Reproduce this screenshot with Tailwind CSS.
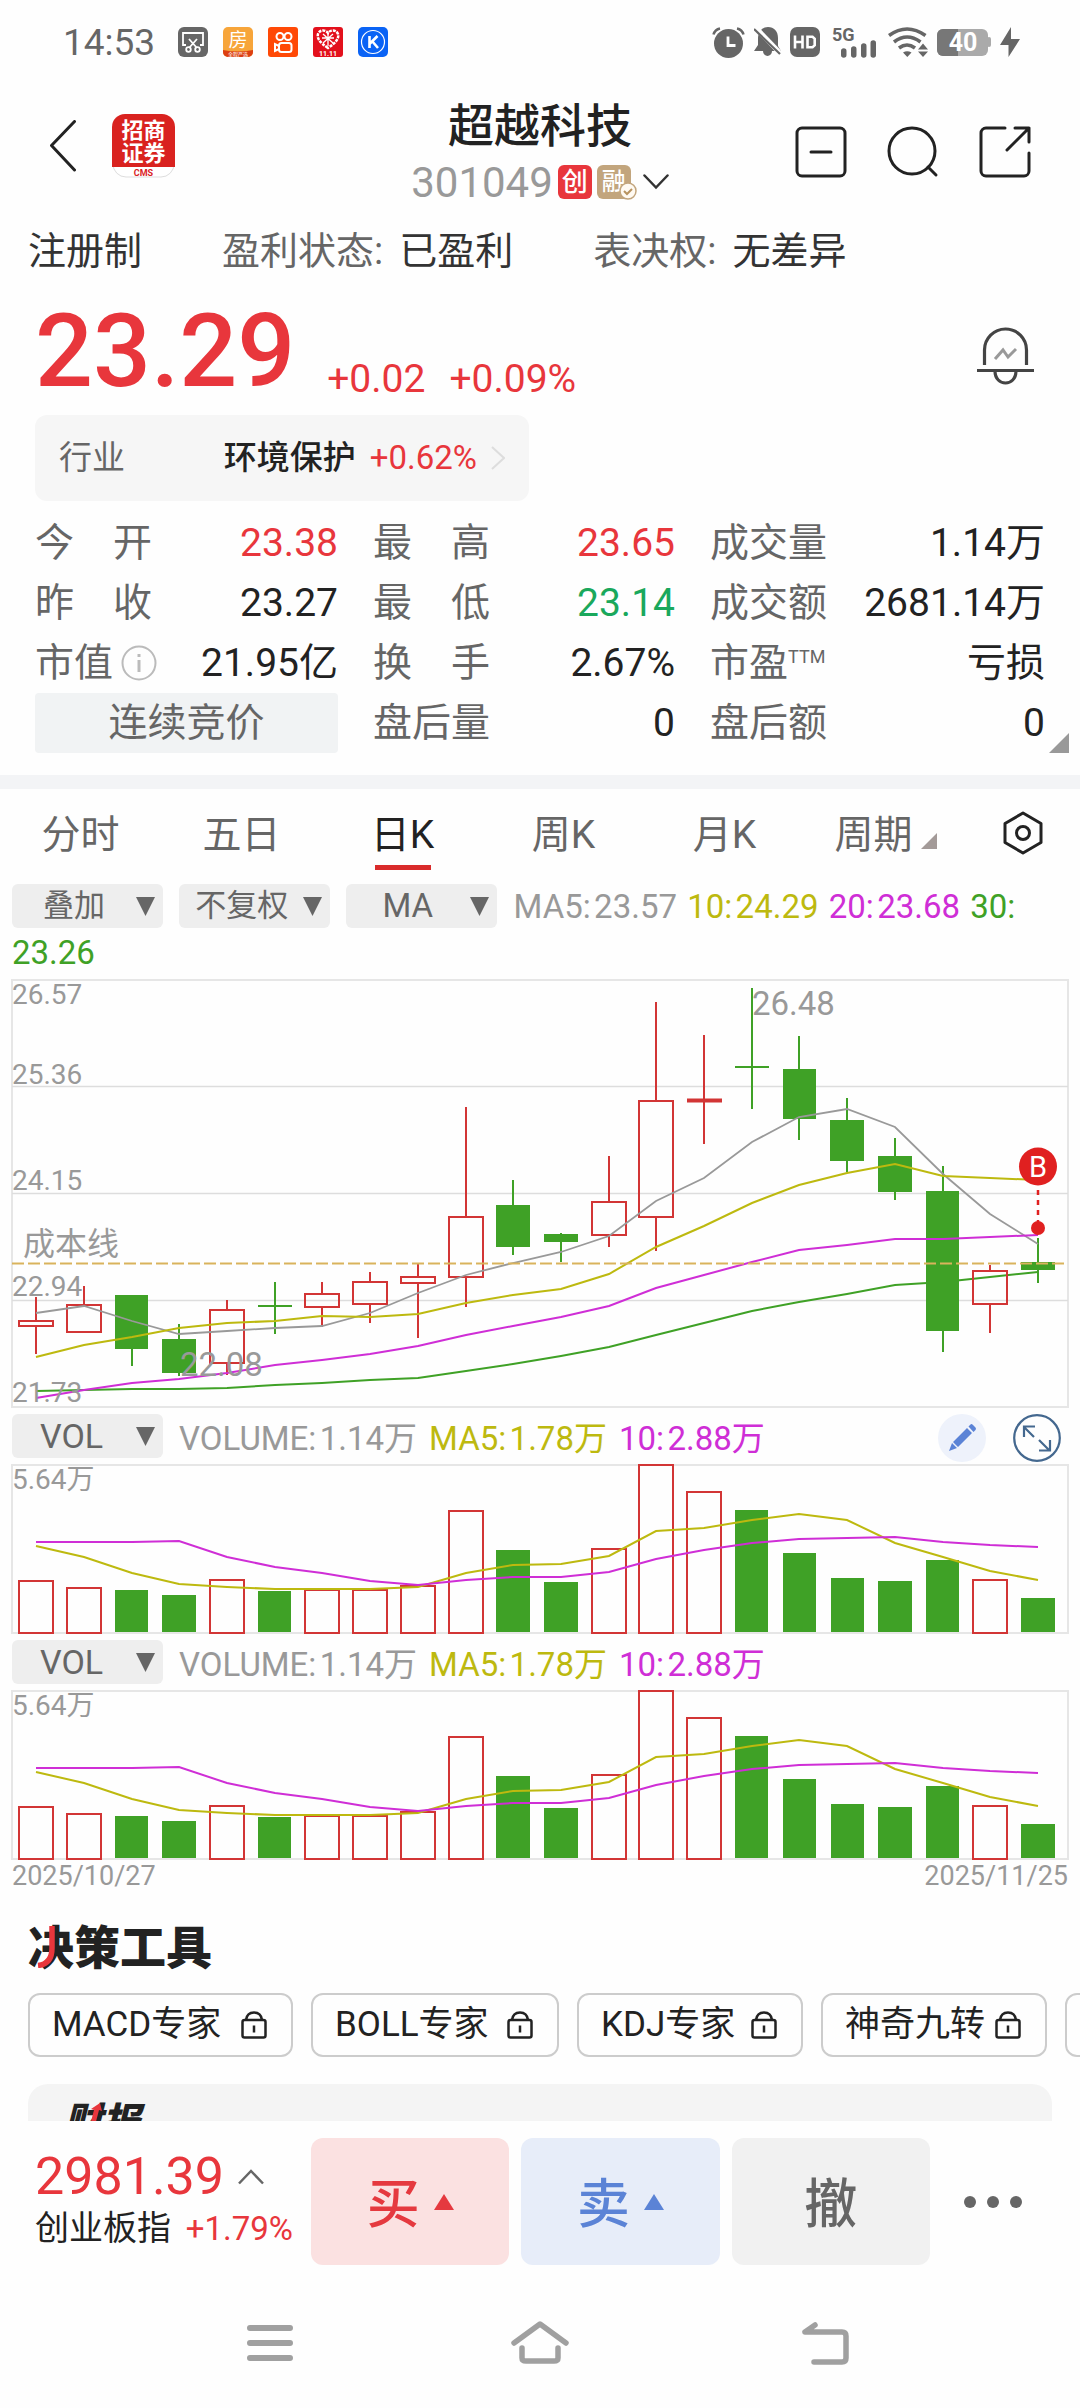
<!DOCTYPE html>
<html lang="zh-CN">
<head>
<meta charset="utf-8">
<meta name="viewport" content="width=device-width, initial-scale=1">
<title>超越科技 301049</title>
<script src="https://cdn.jsdelivr.net/npm/@tailwindcss/browser@4"></script>
</head>
<body class="flex h-screen flex-col overflow-hidden bg-[#fefefe] font-['Roboto','Noto_Sans_CJK_SC',sans-serif] text-[#222]">

<!-- System status bar -->
<div class="flex h-[84px] shrink-0 items-center justify-between pl-[63px] pr-[60px] text-[#666]">
  <div class="flex items-center gap-[15px]">
    <span class="mr-2 text-[37px] leading-none">14:53</span>
    <svg class="size-[30px]" viewBox="0 0 30 30" fill="none" stroke="#fff" stroke-width="1.8"><rect width="30" height="30" rx="6" fill="#666" stroke="none"/><path d="M8 18H5V6h20v12h-3"/><path d="M11 12l8 9M19 12l-8 9"/><circle cx="10.500" cy="22.500" r="2.300"/><circle cx="19.500" cy="22.500" r="2.300"/></svg>
    <svg class="size-[30px]" viewBox="0 0 30 30"><rect width="30" height="30" rx="5" fill="#f7a53a"/><path d="M0 23q15 3 30 0v2a5 5 0 0 1-5 5H5a5 5 0 0 1-5-5z" fill="#dc3f12"/><text x="15" y="20" font-size="19" fill="#fff" text-anchor="middle">房</text><text x="15" y="29" font-size="5" fill="#fff" text-anchor="middle">全程严选</text></svg>
    <svg class="size-[30px]" viewBox="0 0 30 30" fill="none" stroke="#fff" stroke-width="2"><rect width="30" height="30" rx="3" fill="#ff4906" stroke="none"/><circle cx="12" cy="9.500" r="3.500"/><circle cx="20" cy="9.500" r="3.500"/><rect x="11" y="16" width="12.500" height="9" rx="2.500"/><path d="M11 19l-4-2v7l4-2"/></svg>
    <svg class="size-[30px]" viewBox="0 0 30 30"><rect width="30" height="30" rx="3" fill="#e3101c"/><path d="M15 21C6 15 4 11 5 7c2-5 8-4 10-1 2-3 8-4 10 1 1 4-1 8-10 14z" fill="none" stroke="#fff" stroke-width="2.500" stroke-dasharray="3 1"/><path d="M10 7l10 9M20 7l-10 9M9 11h12M15 7v12" stroke="#fff" stroke-width="1.300"/><text x="15" y="29" font-size="7" font-weight="700" fill="#fff" text-anchor="middle">11.11</text></svg>
    <svg class="size-[30px]" viewBox="0 0 30 30" fill="none" stroke="#fff"><rect width="30" height="30" rx="5" fill="#0a63f5" stroke="none"/><circle cx="15" cy="15" r="11.500" stroke-width="1.200"/><path d="M11.500 9v12M19.500 9l-7.500 7.500M14 14l6 7" stroke-width="2.600"/></svg>
  </div>
  <div class="flex items-center gap-[9px]">
    <svg class="h-[31px] w-[33px]" viewBox="0 0 33 31"><circle cx="16.500" cy="16.500" r="14.500" fill="#666"/><path d="M1.500 7.500Q3 2.500 8 1.500M31.500 7.500Q30 2.500 25 1.500" stroke="#666" stroke-width="2.500" fill="none"/><path d="M16 9.500v9h7.500" stroke="#fefefe" stroke-width="2.800" fill="none"/></svg>
    <svg class="h-[30px] w-[27px]" viewBox="0 0 27 30"><path d="M4 12C4 5 8 0 14 0s10 4 10 11v8l3 5H18a4.500 5 0 0 1-9 0H0l4-6z" fill="#666"/><path d="M1 0l26 27" stroke="#fefefe" stroke-width="5"/><path d="M0 2l26 25" stroke="#666" stroke-width="2.200"/></svg>
    <svg class="size-[30px]" viewBox="0 0 30 30" fill="none" stroke="#fefefe" stroke-width="2.600"><rect width="30" height="30" rx="7" fill="#666" stroke="none"/><path d="M5 8.500v13M12.500 8.500v13M5 15h7.500M17.500 9.700h5l2.200 2.200v6.200l-2.200 2.200h-5z"/></svg>
    <svg class="ml-[3px] h-[30px] w-11 overflow-visible" viewBox="0 0 44 30" fill="#666"><text x="0" y="14" font-size="18" font-weight="700">5G</text><path d="M9 24a2.500 2.500 0 0 1 5.500 0v4a2.500 2.500 0 0 1-5.500 0zM19 22a2.500 2.500 0 0 1 5.500 0v6a2.500 2.500 0 0 1-5.500 0zM29 19a2.500 2.500 0 0 1 5.500 0v9a2.500 2.500 0 0 1-5.500 0zM38.500 16a2.500 2.500 0 0 1 5.500 0v12a2.500 2.500 0 0 1-5.500 0z"/></svg>
    <svg class="ml-[3px] h-[30px] w-10" viewBox="0 0 40 30" fill="none" stroke="#666" stroke-width="3.600"><path d="M1 8.500Q19 -4.500 37.500 8.500M6 15Q19 5 32.500 15M11 21Q19 15 27 21"/><path d="M15 25.500q4-2.500 8.500 0L19.300 30zM30 22.500l5-6 5 6zM30 24.500h10l-5 5.500z" fill="#666" stroke="none"/></svg>
    <svg class="h-[27px] w-[54px]" viewBox="0 0 54 27"><rect width="51" height="27" rx="6" fill="#aaa"/><path d="M6 0h15v27H6a6 6 0 0 1-6-6V6a6 6 0 0 1 6-6z" fill="#777"/><rect x="50" y="8" width="4" height="10" rx="2" fill="#aaa"/><text x="26" y="22" font-size="25" font-weight="700" fill="#fff" text-anchor="middle">40</text></svg>
    <svg class="h-[30px] w-5" viewBox="0 0 20 30" fill="#666"><path d="M11 0v12h9L8.500 30V18H0z"/></svg>
  </div>
</div>

<!-- Stock header -->
<header class="relative flex h-[123px] shrink-0 items-center justify-between pl-12 pr-[49px]">
  <div class="flex items-center">
    <button aria-label="返回" class="mr-[36px]"><svg class="h-[52px] w-7" viewBox="0 0 28 52" fill="none" stroke="#222" stroke-width="3" stroke-linecap="round" stroke-linejoin="round"><path d="M26.500 1.500L3.500 25.500L26.500 50"/></svg></button>
    <a href="#" aria-label="招商证券"><svg class="h-[64px] w-[63px]" viewBox="0 0 63 64"><rect x="1" y="1" width="61" height="62" rx="13" fill="#fff" stroke="#ddd"/><path d="M0 53V13A13 13 0 0 1 13 0h37a13 13 0 0 1 13 13v40z" fill="#d9221f"/><g fill="#fff" font-size="22" font-weight="700" text-anchor="middle"><text x="31.500" y="24">招商</text><text x="31.500" y="47">证券</text></g><text x="31.500" y="61.500" font-size="9" font-weight="700" fill="#d9221f" text-anchor="middle">CMS</text></svg></a>
  </div>
  <div class="absolute inset-x-0 top-4 mx-auto flex w-[260px] flex-col items-center">
    <h1 class="text-[46px] font-medium leading-[52px]">超越科技</h1>
    <button class="flex h-[60px] items-center">
      <span class="mr-[5px] text-[42px] text-[#999]">301049</span>
      <span class="mr-[5px] flex h-[34px] w-[34px] items-center justify-center rounded-md bg-[#e8363c] text-[26px] font-medium leading-none text-white">创</span>
      <span class="relative flex h-[34px] w-[34px] items-center justify-center rounded-md bg-[#c2a57d] text-[24px] font-medium leading-none text-white">融<svg class="absolute -right-[6px] -bottom-px size-[18px]" viewBox="0 0 18 18" fill="none"><circle cx="9" cy="9" r="8" fill="#fffaf2" stroke="#c2a57d" stroke-width="1.500"/><path d="M5 9l3 3 5-5" stroke="#b8935f" stroke-width="2"/></svg></span>
      <svg class="ml-3 h-4 w-[26px]" viewBox="0 0 26 16" fill="none" stroke="#333" stroke-width="2.500" stroke-linecap="round"><path d="M1.500 1.500L13 13.500L24.500 1.500"/></svg>
    </button>
  </div>
  <div class="flex items-center gap-[40px] pt-3">
    <button aria-label="移除自选"><svg class="size-[52px]" viewBox="0 0 52 52" fill="none" stroke="#222" stroke-width="3" stroke-linecap="round"><rect x="2" y="2" width="48" height="48" rx="5"/><path d="M16 26h20"/></svg></button>
    <button aria-label="搜索"><svg class="size-[52px]" viewBox="0 0 52 52" fill="none" stroke="#222" stroke-width="3" stroke-linecap="round"><circle cx="25" cy="25" r="23"/><path d="M41 41l8 8"/></svg></button>
    <button aria-label="分享"><svg class="size-[52px]" viewBox="0 0 52 52" fill="none" stroke="#222" stroke-width="3" stroke-linecap="round" stroke-linejoin="round"><path d="M26 2H7a5 5 0 0 0-5 5v38a5 5 0 0 0 5 5h38a5 5 0 0 0 5-5V27M36 2h14v14M50 2L28 24"/></svg></button>
  </div>
</header>

<main class="min-h-0 flex-1 overflow-y-auto [scrollbar-width:none]">
  <div class="flex h-[88px] items-center px-7 text-[38px] text-[#666]">
    <span class="mr-[80px] text-[#333]">注册制</span>
    <span class="mr-[80px]">盈利状态:<span class="ml-4 text-[#333]">已盈利</span></span>
    <span>表决权:<span class="ml-4 text-[#333]">无差异</span></span>
  </div>

  <section class="px-[35px]">
    <div class="flex h-[120px] items-start justify-between text-[#e8363c]">
      <div class="flex items-end">
        <span class="text-[102px] font-medium leading-[112px]">23.29</span>
        <span class="ml-[32px] text-[39px] leading-[56px]">+0.02</span>
        <span class="ml-6 text-[39px] leading-[56px]">+0.09%</span>
      </div>
      <button aria-label="股价提醒" class="mr-[11px] pt-8"><svg class="h-[58px] w-[57px]" viewBox="0 0 57 58" fill="none" stroke="#444" stroke-width="3.200"><path d="M7.500 38V23a21 21 0 0 1 42 0v15M0 43.500h57M18 44c0 16 21 16 21 0"/><path d="M18 32l8-9 5 7 8-8" stroke="#999" stroke-width="3"/></svg></button>
    </div>

    <a href="#" class="flex h-[86px] w-[494px] items-center rounded-xl bg-[#f6f6f6] px-6 text-[33px]">
      <span class="text-[#666]">行业</span>
      <span class="ml-auto font-medium">环境保护</span>
      <span class="ml-[14px] text-[#e8363c]">+0.62%</span>
      <svg class="ml-[14px] h-6 w-[14px]" viewBox="0 0 14 24" fill="none" stroke="#ddd" stroke-width="2"><path d="M1 1l12 11L1 23"/></svg>
    </a>

    <div class="relative mt-3 grid grid-cols-[303fr_302fr_335fr] gap-x-[35px] pb-[22px] text-[39px] leading-[60px] text-[#666]">
      <div class="flex justify-between"><span>今　开</span><span class="text-[#e8363c]">23.38</span></div>
      <div class="flex justify-between"><span>最　高</span><span class="text-[#e8363c]">23.65</span></div>
      <div class="flex justify-between"><span>成交量</span><span class="text-[#222]">1.14万</span></div>
      <div class="flex justify-between"><span>昨　收</span><span class="text-[#222]">23.27</span></div>
      <div class="flex justify-between"><span>最　低</span><span class="text-[#1aa85c]">23.14</span></div>
      <div class="flex justify-between"><span>成交额</span><span class="text-[#222]">2681.14万</span></div>
      <div class="flex justify-between"><span class="flex items-center gap-2">市值<svg class="size-9" viewBox="0 0 36 36" fill="none" stroke="#bbb" stroke-width="2"><circle cx="18" cy="18" r="16.500"/><path d="M18 15v12M18 9v3" stroke-width="3"/></svg></span><span class="text-[#222]">21.95亿</span></div>
      <div class="flex justify-between"><span>换　手</span><span class="text-[#222]">2.67%</span></div>
      <div class="flex justify-between"><span class="flex">市盈<span class="text-[18px] leading-[48px]">TTM</span></span><span class="text-[#222]">亏损</span></div>
      <button class="h-[60px] rounded bg-[#f1f3f4]">连续竞价</button>
      <div class="flex justify-between"><span>盘后量</span><span class="text-[#222]">0</span></div>
      <div class="flex justify-between"><span>盘后额</span><span class="text-[#222]">0</span></div>
      <svg class="absolute -right-6 bottom-[22px] size-5" viewBox="0 0 20 20" fill="#999"><path d="M20 0v20H0z"/></svg>
    </div>
  </section>

  <div class="h-[14px] bg-[#f3f4f6]"></div>

  <nav class="flex h-[95px] items-start text-[39px] leading-[92px] text-[#666]">
    <button class="flex-1">分时</button>
    <button class="flex-1">五日</button>
    <button class="flex flex-1 flex-col items-center text-[#222]"><span class="h-[76px]">日K</span><span class="h-[5px] w-14 bg-[#d92b2b]"></span></button>
    <button class="flex-1">周K</button>
    <button class="flex-1">月K</button>
    <button class="flex flex-1 items-center justify-center gap-2">周期<svg class="mt-3 size-4" viewBox="0 0 16 16" fill="#a39a98"><path d="M16 0v16H0z"/></svg></button>
    <button aria-label="图表设置" class="flex h-[88px] w-[114px] items-center justify-center"><svg class="h-[44px] w-10" viewBox="0 0 40 44" fill="none" stroke="#222" stroke-width="3" stroke-linejoin="round"><path d="M20 2l18 10.500v19L20 42 2 31.500v-19z"/><circle cx="20" cy="22" r="6.500"/></svg></button>
  </nav>

  <section class="px-3">
    <!-- Overlay, adjustment and indicator pickers, followed by the moving averages -->
    <div class="mb-1 text-[33px] leading-[46px]">
      <span class="relative mr-2 inline-block align-top"><select aria-label="叠加" class="block h-11 w-[151px] appearance-none rounded-md bg-[#eee] pl-[31px] text-[31px] leading-[44px] text-[#666]"><option>叠加</option></select><svg class="pointer-events-none absolute right-2 top-[13px] h-[19px] w-[19px]" viewBox="0 0 19 19" fill="#666"><path d="M0 0h19l-9.500 19z"/></svg></span>
      <span class="relative mr-2 inline-block align-top"><select aria-label="复权方式" class="block h-11 w-[151px] appearance-none rounded-md bg-[#eee] pl-4 text-[31px] leading-[44px] text-[#666]"><option>不复权</option></select><svg class="pointer-events-none absolute right-2 top-[13px] h-[19px] w-[19px]" viewBox="0 0 19 19" fill="#666"><path d="M0 0h19l-9.500 19z"/></svg></span>
      <span class="relative mr-2 inline-block align-top"><select aria-label="主图指标" class="block h-11 w-[151px] appearance-none rounded-md bg-[#eee] pl-9 text-[33px] leading-[44px] text-[#666]"><option>MA</option></select><svg class="pointer-events-none absolute right-2 top-[13px] h-[19px] w-[19px]" viewBox="0 0 19 19" fill="#666"><path d="M0 0h19l-9.500 19z"/></svg></span>
      <span class="mr-[2px] text-[#999]">MA5:&#8202;23.57</span>
      <span class="mr-[2px] text-[#bdb90f]">10:&#8202;24.29</span>
      <span class="mr-[2px] text-[#cf2ed6]">20:&#8202;23.68</span>
      <span class="text-[#3fa126]">30:</span>
      <span class="text-[#3fa126]">23.26</span>
    </div>

    <!-- Daily candles -->
    <svg class="block h-auto w-full overflow-visible" viewBox="0 0 1056 427" fill="none" role="img" aria-label="日K线图">
      <rect x="0" y="0" width="1056" height="427" stroke="#e6e6e6" stroke-width="2"/>
      <path d="M0 106.500H1056M0 213.500H1056M0 320.500H1056" stroke="#ddd" stroke-width="1.500"/>
      <polyline points="24,411 72,410 120,409 167,409 215,408 263,405 310,403 358,400 406,398 454,391 501,384 549,376 597,367 644,355 692,343 740,331 787,322 835,314 883,305 931,302 978,297 1026,292" stroke="#3fa126" stroke-width="2"/>
      <g stroke="#d23535" stroke-width="2">
        <path d="M24 317V341M24 346V374M7 341h34v5h-34zM72 306V325M55 325h34v27h-34zM215 320V330M215 383V395M198 330h34v53h-34zM310 302V314M310 327V347M293 314h34v13h-34zM358 292V302M358 324V343M341 302h34v22h-34zM406 283V297M406 303V358M389 297h34v6h-34zM454 127V237M454 297V327M437 237h34v60h-34zM597 176V222M597 255V267M580 222h34v33h-34zM644 22V121M644 237V271M627 121h34v116h-34zM692 55V164M978 285V291M978 324V353M961 291h34v33h-34z"/>
        <path d="M675 120.500h35" stroke-width="4"/>
      </g>
      <g stroke="#3fa126" stroke-width="2" fill="#3fa126">
        <path d="M120 315V386M167 344V396M263 302V354M246 326H280M501 200V275M549 253V282M740 8V129M723 87H757M787 56V160M835 118V192M883 158V220M931 186V372M1026 258V303"/>
        <path stroke="none" d="M103 315h33v54h-33zM150 359h34v34h-34zM484 225h34v42h-34zM532 254h34v8h-34zM771 89h33v50h-33zM818 140h34v41h-34zM866 176h34v36h-34zM914 211h33v140h-33zM1009 282h34v8h-34z"/>
      </g>
      <polyline points="24,333 72,326 120,341 167,354 215,351 263,348 310,346 358,333 406,313 454,295 501,283 549,272 597,256 644,221 692,198 740,162 787,137 835,129 883,147 931,194 978,234 1026,264" stroke="#999" stroke-width="1.800"/>
      <polyline points="24,377 72,365 120,357 167,348 215,343 263,341 310,336 358,337 406,334 454,323 501,315 549,309 597,294 644,267 692,246 740,223 787,205 835,193 883,184 931,196 978,198 1026,200" stroke="#bdb90f" stroke-width="2"/>
      <polyline points="24,418 72,410 120,403 167,399 215,393 263,385 310,380 358,374 406,366 454,355 501,346 549,337 597,326 644,308 692,295 740,282 787,270 835,265 883,259 931,259 978,257 1026,255" stroke="#cf2ed6" stroke-width="2"/>
      <path d="M0 283.500H1052" stroke="#d9b35c" stroke-width="2" stroke-dasharray="12 4"/>
      <g fill="#999" font-size="28">
        <text x="0" y="24">26.57</text><text x="0" y="104">25.36</text><text x="0" y="210">24.15</text><text x="0" y="316">22.94</text><text x="0" y="422">21.73</text>
        <text x="11" y="275" font-size="32">成本线</text>
        <text x="168" y="396" font-size="33">22.08</text><text x="740" y="35" font-size="33">26.48</text>
      </g>
      <path d="M1026 210V242" stroke="#e02020" stroke-width="2.500" stroke-dasharray="5 5"/>
      <circle cx="1026" cy="248" r="7" fill="#e02020"/><circle cx="1026" cy="186.500" r="19" fill="#e02020"/>
      <text x="1026" y="197" font-size="29" fill="#fff" text-anchor="middle">B</text>
    </svg>

    <!-- Volume pane 1 -->
    <div class="mt-[7px] flex h-[51px] items-start text-[33px] leading-[50px]">
      <span class="relative mr-4"><select aria-label="副图指标一" class="block h-11 w-[151px] appearance-none rounded-md bg-[#eee] pl-7 text-[34px] leading-[44px] text-[#666]"><option>VOL</option></select><svg class="pointer-events-none absolute right-2 top-[13px] h-[19px] w-[19px]" viewBox="0 0 19 19" fill="#666"><path d="M0 0h19l-9.500 19z"/></svg></span>
      <span class="mr-3 text-[#999]">VOLUME:&#8202;1.14万</span>
      <span class="mr-3 text-[#bdb90f]">MA5:&#8202;1.78万</span>
      <span class="text-[#cf2ed6]">10:&#8202;2.88万</span>
      <button aria-label="画线" class="ml-auto mr-[27px]"><svg class="size-12" viewBox="0 0 48 48"><circle cx="24" cy="24" r="24" fill="#eef2fb"/><path d="M11 37l3-8 5 5zM15 28L29 14l5 5L20 33zM30.500 12.500l2-2q1-1 2.500.500l2.500 2.500q1 1 0 2.500l-2 2z" fill="#5b83d6"/></svg></button>
      <button aria-label="全屏" class="mr-[7px]"><svg class="size-12" viewBox="0 0 48 48" fill="none" stroke="#44688f" stroke-width="2.200"><circle cx="24" cy="24" r="22.800"/><path d="M21 23L11 13M11 23V12.500H22M26 26l10 10M37 26v10.500H26"/></svg></button>
    </div>
    <svg class="block h-auto w-full overflow-visible" viewBox="0 0 1056 168" fill="none" role="img" aria-label="成交量">
      <defs>
        <g id="volume">
          <rect x="0" y="0" width="1056" height="168" stroke="#e6e6e6" stroke-width="2"/>
          <path d="M7 116h34v52h-34zM55 123h34v45h-34zM198 115h34v53h-34zM293 125h34v43h-34zM341 125h34v43h-34zM389 121h34v47h-34zM437 46h34v122h-34zM580 84h34v84h-34zM627 0h34v168h-34zM675 27h34v141h-34zM961 115h34v53h-34z" stroke="#d23535" stroke-width="2"/>
          <path d="M103 125h33v42h-33zM150 130h34v37h-34zM246 126h33v41h-33zM484 85h34v82h-34zM532 117h34v50h-34zM723 45h33v122h-33zM771 88h33v79h-33zM819 113h33v54h-33zM866 116h34v51h-34zM914 95h33v72h-33zM1009 133h34v34h-34z" fill="#3fa126"/>
          <polyline points="24,81 72,92 120,108 167,119 215,122 263,124 310,124 358,124 406,122 454,108 501,100 549,99 597,91 644,66 692,63 740,55 787,49 835,55 883,78 931,92 978,106 1026,115" stroke="#bdb90f" stroke-width="2"/>
          <polyline points="24,77 72,77 120,77 167,76 215,92 263,102 310,108 358,116 406,120 454,115 501,112 549,112 597,107 644,94 692,85 740,78 787,74 835,73 883,72 931,77 978,80 1026,82" stroke="#cf2ed6" stroke-width="2"/>
          <text x="0" y="24" font-size="28" fill="#999">5.64万</text>
        </g>
      </defs>
      <use href="#volume"/>
    </svg>

    <!-- Volume pane 2 -->
    <div class="mt-[7px] flex h-[51px] items-start text-[33px] leading-[50px]">
      <span class="relative mr-4"><select aria-label="副图指标二" class="block h-11 w-[151px] appearance-none rounded-md bg-[#eee] pl-7 text-[34px] leading-[44px] text-[#666]"><option>VOL</option></select><svg class="pointer-events-none absolute right-2 top-[13px] h-[19px] w-[19px]" viewBox="0 0 19 19" fill="#666"><path d="M0 0h19l-9.500 19z"/></svg></span>
      <span class="mr-3 text-[#999]">VOLUME:&#8202;1.14万</span>
      <span class="mr-3 text-[#bdb90f]">MA5:&#8202;1.78万</span>
      <span class="text-[#cf2ed6]">10:&#8202;2.88万</span>
    </div>
    <svg class="block h-auto w-full overflow-visible" viewBox="0 0 1056 168" fill="none" role="img" aria-label="成交量"><use href="#volume"/></svg>
    <div class="flex justify-between text-[27px] leading-[34px] text-[#999]"><span>2025/10/27</span><span>2025/11/25</span></div>
  </section>

  <section class="pl-7 pt-[25px]">
    <h2 class="relative h-[58px] text-[46px] font-black leading-[60px]">决策工具<svg class="absolute left-[9px] top-2 h-[42px] w-5" viewBox="0 0 20 42" fill="none" stroke="#e8363c" stroke-width="5.500"><path d="M15 0v22q0 16-14 17.500"/></svg></h2>
    <div class="mt-[17px] flex gap-[18px] overflow-hidden text-[35px]">
      <button class="flex h-16 w-[265px] shrink-0 items-center justify-between rounded-xl border-2 border-[#ccc] pl-[22px] pr-6">MACD专家<svg class="h-7 w-[26px]" viewBox="0 0 26 28" fill="none" stroke="#222" stroke-width="2.500"><rect x="1.500" y="9" width="23" height="17.500" rx="2"/><path d="M5 9q1-7.500 8-7.500t8 7.500M13 14.500v7"/></svg></button>
      <button class="flex h-16 w-[248px] shrink-0 items-center justify-between rounded-xl border-2 border-[#ccc] pl-[22px] pr-6">BOLL专家<svg class="h-7 w-[26px]" viewBox="0 0 26 28" fill="none" stroke="#222" stroke-width="2.500"><rect x="1.500" y="9" width="23" height="17.500" rx="2"/><path d="M5 9q1-7.500 8-7.500t8 7.500M13 14.500v7"/></svg></button>
      <button class="flex h-16 w-[226px] shrink-0 items-center justify-between rounded-xl border-2 border-[#ccc] pl-[22px] pr-6">KDJ专家<svg class="h-7 w-[26px]" viewBox="0 0 26 28" fill="none" stroke="#222" stroke-width="2.500"><rect x="1.500" y="9" width="23" height="17.500" rx="2"/><path d="M5 9q1-7.500 8-7.500t8 7.500M13 14.500v7"/></svg></button>
      <button class="flex h-16 w-[226px] shrink-0 items-center justify-between rounded-xl border-2 border-[#ccc] pl-[22px] pr-6">神奇九转<svg class="h-7 w-[26px]" viewBox="0 0 26 28" fill="none" stroke="#222" stroke-width="2.500"><rect x="1.500" y="9" width="23" height="17.500" rx="2"/><path d="M5 9q1-7.500 8-7.500t8 7.500M13 14.500v7"/></svg></button>
      <button aria-label="更多工具" class="h-16 w-[200px] shrink-0 rounded-xl border-2 border-[#ccc]"></button>
    </div>
    <article class="mr-7 mt-[27px] h-[200px] rounded-[20px] bg-[#f4f4f4] px-9 pt-4">
      <h3 class="relative text-[38px] font-black italic leading-[44px]">财报<svg class="absolute left-[22px] top-[3px] h-[38px] w-[18px]" viewBox="0 0 18 38" fill="#e8363c"><path d="M14 0l2 8-3-1L5 38H0L8 7 5 6z"/></svg></h3>
    </article>
  </section>
</main>

<!-- Trade bar -->
<footer class="flex h-[161px] shrink-0 items-center gap-3 bg-[#fefefe] pl-[35px] pr-[58px]">
  <button class="w-[264px] shrink-0 text-left">
    <span class="flex h-[54px] items-center text-[52px] leading-none text-[#e8363c]">2981.39<svg class="ml-[14px] h-4 w-[26px]" viewBox="0 0 26 16" fill="none" stroke="#666" stroke-width="2.500"><path d="M1 14.500L13 2l12 12.500"/></svg></span>
    <span class="flex h-[50px] items-center justify-between text-[34px]">创业板指<span class="mr-[6px] text-[33px] text-[#e8363c]">+1.79%</span></span>
  </button>
  <button class="flex h-[127px] flex-1 items-center justify-center gap-[14px] rounded-xl bg-[#fbe1e1] text-[53px] font-medium text-[#e5393f]"><span class="pt-2">买</span><svg class="h-4 w-5" viewBox="0 0 20 16" fill="#e5393f"><path d="M10 0l10 16H0z"/></svg></button>
  <button class="flex h-[127px] flex-1 items-center justify-center gap-[14px] rounded-xl bg-[#e7edf9] text-[53px] font-medium text-[#5b83d6]"><span class="pt-2">卖</span><svg class="h-4 w-5" viewBox="0 0 20 16" fill="#5b83d6"><path d="M10 0l10 16H0z"/></svg></button>
  <button class="h-[127px] flex-1 rounded-xl bg-[#f1f1f1] pt-2 text-[53px] font-medium text-[#666]">撤</button>
  <button aria-label="更多" class="ml-[22px]"><svg class="h-3 w-[58px]" viewBox="0 0 58 12" fill="#666"><circle cx="6" cy="6" r="6"/><circle cx="29" cy="6" r="6"/><circle cx="52" cy="6" r="6"/></svg></button>
</footer>

<!-- System navigation -->
<nav class="flex h-[126px] shrink-0 items-center justify-center gap-[210px] pb-1 pl-4">
  <button aria-label="最近任务"><svg class="h-11 w-[60px]" viewBox="0 0 60 44" stroke="#a0a0a0" stroke-width="6" stroke-linecap="round"><path d="M10 7h40M10 22h40M10 37h40"/></svg></button>
  <button aria-label="主屏幕"><svg class="h-11 w-[60px]" viewBox="0 0 60 44" fill="none" stroke="#a0a0a0" stroke-width="5.500" stroke-linecap="round" stroke-linejoin="round"><path d="M4 22L30 3l26 19M12 27v10q0 3 4 3h28q4 0 4-3V27"/></svg></button>
  <button aria-label="返回上一级" class="ml-4"><svg class="h-11 w-[60px]" viewBox="0 0 60 44" fill="none" stroke="#a0a0a0" stroke-width="5.500" stroke-linecap="round" stroke-linejoin="round"><path d="M19 4L9 11h37q4 0 4 4v22q0 4-4 4H18M9 11h10"/></svg></button>
</nav>
</body>
</html>
